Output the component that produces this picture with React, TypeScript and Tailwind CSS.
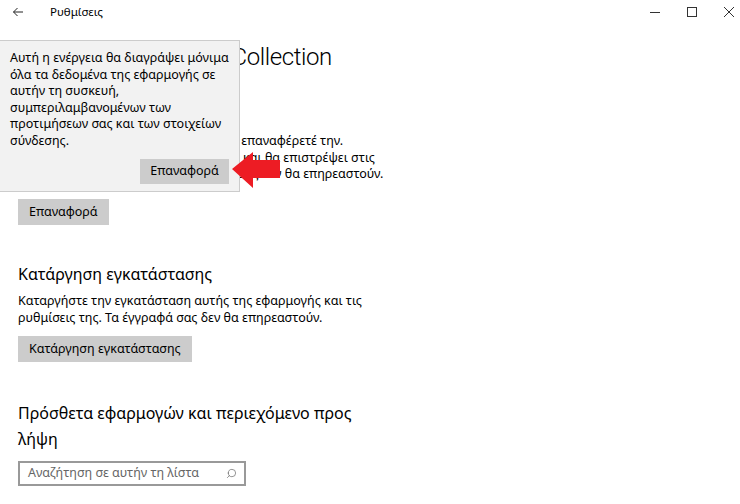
import { Search } from 'lucide-react'

const font = { fontFamily: '"Noto Sans", "Open Sans", sans-serif' }
const titleFont = { fontFamily: 'Roboto, "Noto Sans", sans-serif' }

function TitleBar() {
  return (
    <div className="flex h-[24px] items-center text-[11.5px] text-black">
      <svg className="ml-[12px] h-[12px] w-[12px]" viewBox="0 0 12 12" fill="none" stroke="#222" strokeWidth="1">
        <path d="M11 6H1.5M5.5 2L1.5 6l4 4" />
      </svg>
      <span className="ml-[26px]">Ρυθμίσεις</span>
      <div className="ml-auto mr-[6px] flex items-center gap-[27px]">
        <span className="block h-px w-[10px] bg-[#333]" />
        <span className="block h-[10px] w-[10px] border border-[#333]" />
        <svg className="h-[10px] w-[10px]" viewBox="0 0 10 10" stroke="#333" strokeWidth="1">
          <path d="M0 0l10 10M10 0L0 10" />
        </svg>
      </div>
    </div>
  )
}

function GrayButton({ children }: { children: React.ReactNode }) {
  return (
    <button className="h-[26px] bg-[#cccccc] px-[11px] text-[12.5px] leading-none text-black">{children}</button>
  )
}

export default function App() {
  return (
    <div className="relative h-[504px] w-[740px] overflow-hidden bg-white text-black" style={font}>
      <TitleBar />
      <div className="px-[18px]">
        <h1
          className="mt-[16px] whitespace-nowrap text-[24px] font-light leading-[34px] tracking-[-0.4px] [word-spacing:12px]"
          style={titleFont}
        >
          Microsoft Solitaire Collection
        </h1>

        <h2 className="mt-[22px] text-[16px] leading-[28px]">Επαναφορά</h2>
        <div className="mt-[9px] text-[12.5px] leading-[16.5px]">
          <div className="whitespace-nowrap">Αν η εφαρμογή δεν λειτουργεί σωστά, επαναφέρετέ την.</div>
          <div className="whitespace-nowrap">Η εφαρμογή θα εγκατασταθεί εκ νέου, και θα επιστρέψει στις</div>
          <div className="whitespace-nowrap">προεπιλεγμένες ρυθμίσεις. Τα αρχεία σας δεν θα επηρεαστούν.</div>
        </div>
        <div className="mt-[15px]">
          <GrayButton>Επαναφορά</GrayButton>
        </div>

        <h2 className="mt-[36px] text-[16px] leading-[26px]">Κατάργηση εγκατάστασης</h2>
        <p className="mt-[5px] w-[370px] text-[12.5px] leading-[17.5px]">
          Καταργήστε την εγκατάσταση αυτής της εφαρμογής και τις ρυθμίσεις της. Τα έγγραφά σας δεν θα επηρεαστούν.
        </p>
        <div className="mt-[8px]">
          <GrayButton>Κατάργηση εγκατάστασης</GrayButton>
        </div>

        <h2 className="mt-[38px] w-[360px] text-[16px] leading-[26px]">
          Πρόσθετα εφαρμογών και περιεχόμενο προς λήψη
        </h2>
        <div className="mt-[9px] flex h-[25px] w-[228px] items-center border-2 border-[#999] pl-[8px] pr-[7px]">
          <span className="flex-1 text-[12.5px] text-[#666]">Αναζήτηση σε αυτήν τη λίστα</span>
          <Search className="h-[11px] w-[11px] -scale-x-100 text-[#666]" strokeWidth={1.5} />
        </div>
      </div>

      <div className="absolute left-0 top-[40px] flex h-[152px] w-[240px] flex-col border border-l-0 border-[#cccccc] bg-[#f2f2f2] px-[10px] pt-[9px]">
        <p className="whitespace-nowrap text-[12.5px] leading-[16.6px]">
          Αυτή η ενέργεια θα διαγράψει μόνιμα
          <br />
          όλα τα δεδομένα της εφαρμογής σε
          <br />
          αυτήν τη συσκευή,
          <br />
          συμπεριλαμβανομένων των
          <br />
          προτιμήσεων σας και των στοιχείων
          <br />
          σύνδεσης.
        </p>
        <div className="mt-auto mb-[7px] flex justify-end">
          <button className="h-[25px] w-[89px] bg-[#cccccc] text-[12.5px] leading-none">Επαναφορά</button>
        </div>
      </div>

      <svg className="absolute left-[230px] top-[150px] h-[40px] w-[52px]" viewBox="0 0 52 40">
        <path d="M2 19L23 2V10H50V28H23V38Z" fill="#ed1c24" />
      </svg>
    </div>
  )
}
